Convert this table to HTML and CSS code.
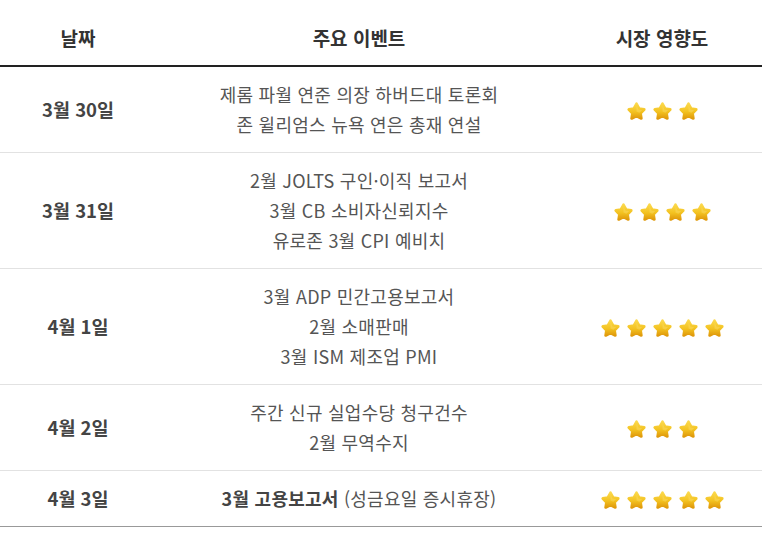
FILE: index.html
```html
<!DOCTYPE html>
<html lang="ko">
<head>
<meta charset="utf-8">
<link rel="stylesheet" href="styles.css">
</head>
<body>
<svg class="defs" width="0" height="0" aria-hidden="true">
  <defs>
    <linearGradient id="gold" x1="0" y1="0" x2="0" y2="1">
      <stop offset="0" stop-color="#fbd84a"/>
      <stop offset="0.55" stop-color="#f3c220"/>
      <stop offset="1" stop-color="#e09a0c"/>
    </linearGradient>
    <symbol id="star" viewBox="0 0 24 24">
      <polygon points="12,3.2 14.9,8.6 20.8,9.6 16.6,13.9 17.5,19.9 12,17.2 6.5,19.9 7.4,13.9 3.2,9.6 9.1,8.6" fill="url(#gold)" stroke="url(#gold)" stroke-width="3.2" stroke-linejoin="round"/>
      <polygon points="12,5 14.2,9.7 18.6,10.5 15.2,13.4 12,12" fill="#fde37c" opacity="0.35"/>
    </symbol>
  </defs>
</svg>
<table class="schedule">
  <thead>
    <tr>
      <th class="col-date">날짜</th>
      <th class="col-event">주요 이벤트</th>
      <th class="col-impact">시장 영향도</th>
    </tr>
  </thead>
  <tbody>
    <tr>
      <td class="date">3월 30일</td>
      <td class="event">제롬 파월 연준 의장 하버드대 토론회<br>존 윌리엄스 뉴욕 연은 총재 연설</td>
      <td class="impact"><span class="stars"><svg class="star"><use href="#star"/></svg><svg class="star"><use href="#star"/></svg><svg class="star"><use href="#star"/></svg></span></td>
    </tr>
    <tr>
      <td class="date">3월 31일</td>
      <td class="event">2월 JOLTS 구인·이직 보고서<br>3월 CB 소비자신뢰지수<br>유로존 3월 CPI 예비치</td>
      <td class="impact"><span class="stars"><svg class="star"><use href="#star"/></svg><svg class="star"><use href="#star"/></svg><svg class="star"><use href="#star"/></svg><svg class="star"><use href="#star"/></svg></span></td>
    </tr>
    <tr>
      <td class="date">4월 1일</td>
      <td class="event">3월 ADP 민간고용보고서<br>2월 소매판매<br>3월 ISM 제조업 PMI</td>
      <td class="impact"><span class="stars"><svg class="star"><use href="#star"/></svg><svg class="star"><use href="#star"/></svg><svg class="star"><use href="#star"/></svg><svg class="star"><use href="#star"/></svg><svg class="star"><use href="#star"/></svg></span></td>
    </tr>
    <tr>
      <td class="date">4월 2일</td>
      <td class="event">주간 신규 실업수당 청구건수<br>2월 무역수지</td>
      <td class="impact"><span class="stars"><svg class="star"><use href="#star"/></svg><svg class="star"><use href="#star"/></svg><svg class="star"><use href="#star"/></svg></span></td>
    </tr>
    <tr class="last">
      <td class="date">4월 3일</td>
      <td class="event"><strong>3월 고용보고서</strong> (성금요일 증시휴장)</td>
      <td class="impact"><span class="stars"><svg class="star"><use href="#star"/></svg><svg class="star"><use href="#star"/></svg><svg class="star"><use href="#star"/></svg><svg class="star"><use href="#star"/></svg><svg class="star"><use href="#star"/></svg></span></td>
    </tr>
  </tbody>
</table>
</body>
</html>
```

FILE: styles.css
```css
html, body {
  margin: 0;
  padding: 0;
  background: #ffffff;
}

body {
  font-family: "Noto Sans CJK KR", "Noto Sans", sans-serif;
  color: #555555;
}

.defs {
  position: absolute;
  width: 0;
  height: 0;
  overflow: hidden;
}

.schedule {
  width: 762px;
  border-collapse: collapse;
  table-layout: fixed;
}

.col-date { width: 156px; }
.col-event { width: 406px; }
.col-impact { width: 200px; }

.schedule th {
  font-size: 19px;
  font-weight: 700;
  color: #333333;
  line-height: 30px;
  padding: 23px 0 12px;
  text-align: center;
  border-bottom: 2px solid #222222;
}

.schedule td {
  text-align: center;
  vertical-align: middle;
  font-size: 18px;
  letter-spacing: 0.25px;
  line-height: 30px;
  padding: 12px 0 13px;
  border-bottom: 1px solid #e2e2e2;
}

.schedule tr.last td {
  border-bottom: 1px solid #999999;
}

.schedule td.date {
  font-size: 18.5px;
  letter-spacing: 0;
  font-weight: 700;
  color: #444444;
}

.event {
  color: #555555;
}

.event strong {
  font-weight: 700;
  color: #444444;
}

.stars {
  display: inline-flex;
  gap: 5px;
  vertical-align: middle;
  margin-top: -2px;
}

.star {
  width: 21px;
  height: 21px;
  display: block;
}
```
